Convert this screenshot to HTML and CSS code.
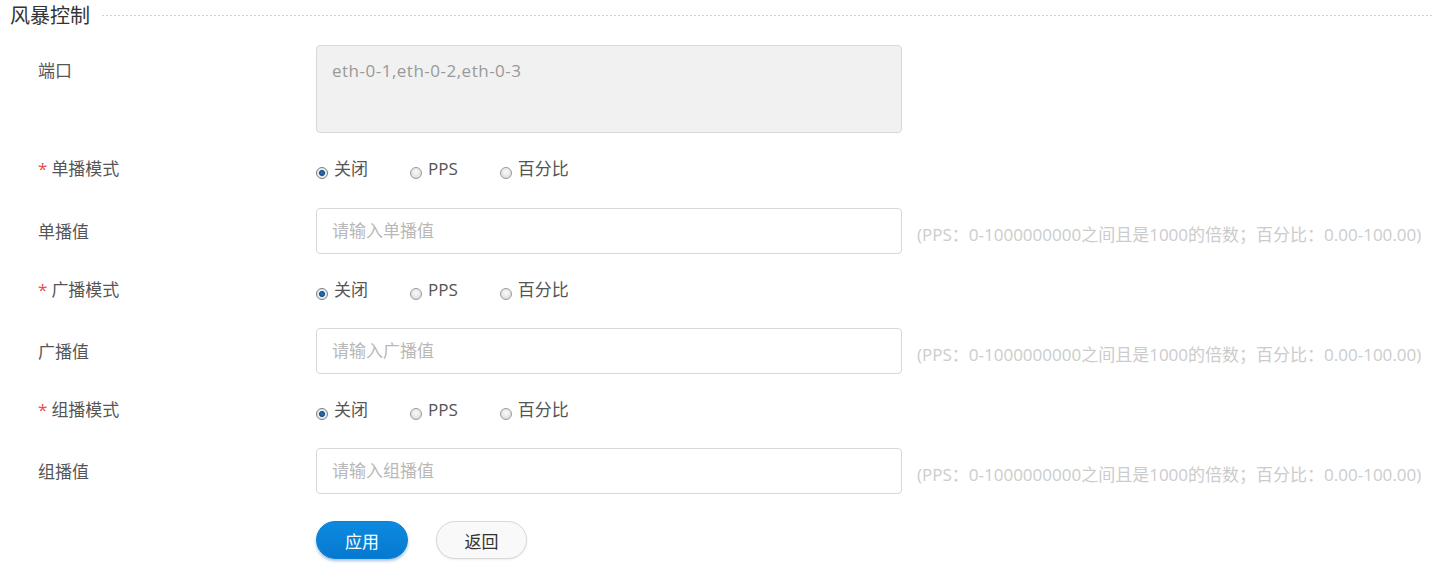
FILE: index.html
```html
<!DOCTYPE html>
<html lang="zh-CN">
<head>
<meta charset="utf-8">
<title>风暴控制</title>
<link rel="stylesheet" href="styles.css">
</head>
<body>
<div class="panel">
  <div class="legend">
    <span class="legend-text">风暴控制</span>
    <span class="legend-line"></span>
  </div>
  <form class="form">
    <div class="row row-area">
      <label class="label label-area">端口</label>
      <div class="field">
        <div class="textarea">eth-0-1,eth-0-2,eth-0-3</div>
      </div>
    </div>

    <div class="row row-radio">
      <label class="label"><span class="req">*</span>单播模式</label>
      <div class="field radios">
        <span class="radio-opt"><span class="radio checked"></span><span class="radio-text">关闭</span></span>
        <span class="radio-opt"><span class="radio"></span><span class="radio-text">PPS</span></span>
        <span class="radio-opt"><span class="radio"></span><span class="radio-text">百分比</span></span>
      </div>
    </div>

    <div class="row">
      <label class="label">单播值</label>
      <div class="field">
        <div class="input placeholder">请输入单播值</div>
        <span class="hint">(PPS：0-1000000000之间且是1000的倍数；百分比：0.00-100.00)</span>
      </div>
    </div>

    <div class="row row-radio">
      <label class="label"><span class="req">*</span>广播模式</label>
      <div class="field radios">
        <span class="radio-opt"><span class="radio checked"></span><span class="radio-text">关闭</span></span>
        <span class="radio-opt"><span class="radio"></span><span class="radio-text">PPS</span></span>
        <span class="radio-opt"><span class="radio"></span><span class="radio-text">百分比</span></span>
      </div>
    </div>

    <div class="row">
      <label class="label">广播值</label>
      <div class="field">
        <div class="input placeholder">请输入广播值</div>
        <span class="hint">(PPS：0-1000000000之间且是1000的倍数；百分比：0.00-100.00)</span>
      </div>
    </div>

    <div class="row row-radio">
      <label class="label"><span class="req">*</span>组播模式</label>
      <div class="field radios">
        <span class="radio-opt"><span class="radio checked"></span><span class="radio-text">关闭</span></span>
        <span class="radio-opt"><span class="radio"></span><span class="radio-text">PPS</span></span>
        <span class="radio-opt"><span class="radio"></span><span class="radio-text">百分比</span></span>
      </div>
    </div>

    <div class="row">
      <label class="label">组播值</label>
      <div class="field">
        <div class="input placeholder">请输入组播值</div>
        <span class="hint">(PPS：0-1000000000之间且是1000的倍数；百分比：0.00-100.00)</span>
      </div>
    </div>

    <div class="row row-buttons">
      <span class="label"></span>
      <div class="field buttons">
        <button type="button" class="btn btn-primary">应用</button>
        <button type="button" class="btn btn-default">返回</button>
      </div>
    </div>
  </form>
</div>
</body>
</html>
```

FILE: styles.css
```css
* { box-sizing: border-box; }

html, body {
  margin: 0;
  padding: 0;
  background: #ffffff;
}

body {
  font-family: "Open Sans", "Noto Sans CJK SC", sans-serif;
  font-size: 17px;
  color: #555555;
}

.panel {
  padding: 0 0 0 10px;
}

.legend {
  display: flex;
  align-items: center;
  height: 32px;
}

.legend-text {
  font-size: 20px;
  color: #333333;
  line-height: 32px;
  padding-right: 12px;
}

.legend-line {
  flex: 1;
  height: 1px;
  margin-top: -2px;
  background-image: repeating-linear-gradient(90deg, #d0d0d0 0 2px, transparent 2px 4px);
}

.form {
  margin-top: 13px;
  padding-left: 28px;
}

.row {
  display: flex;
  align-items: flex-start;
  margin-bottom: 22px;
}

.label {
  width: 278px;
  flex: none;
  line-height: 20px;
  padding-top: 14px;
  color: #555555;
}

.label-area {
  padding-top: 16px;
}

.req {
  color: #e84b4b;
  margin-right: 4px;
}

.field {
  display: flex;
  align-items: center;
}

.textarea {
  width: 586px;
  height: 88px;
  background: #f1f1f1;
  border: 1px solid #d8d8d8;
  border-radius: 4px;
  padding: 14px 15px;
  line-height: 22px;
  color: #999999;
  letter-spacing: 0.5px;
}

.input {
  width: 586px;
  height: 46px;
  border: 1px solid #d8d8d8;
  border-radius: 4px;
  padding: 0 15px;
  line-height: 44px;
  background: #ffffff;
}

.row-area + .row-radio {
  margin-top: 1px;
  margin-bottom: 23px;
}

.placeholder {
  color: #b8b8b8;
}

.hint {
  margin-left: 15px;
  color: #cccccc;
  white-space: nowrap;
  margin-top: 4px;
}

.row-radio .label {
  padding-top: 4px;
}

.radios {
  height: 30px;
}

.radio-opt {
  display: inline-flex;
  align-items: center;
  margin-right: 42px;
  color: #555555;
}

.radio-opt:nth-child(2) {
  margin-right: 42px;
}

.radio {
  width: 12px;
  height: 12px;
  border-radius: 50%;
  border: 1px solid #9a9a9a;
  background: radial-gradient(circle at 50% 40%, #fbfbfb 0, #dcdcdc 80%);
  margin-right: 6px;
  margin-top: 5px;
  position: relative;
  flex: none;
}

.radio.checked {
  border-color: #6e7f90;
  background: radial-gradient(circle at 50% 50%, #2f7ac0 0, #184d86 2.5px, #e8e8e8 3.5px, #f5f5f5 100%);
}

.radio-text {
  line-height: 20px;
  margin-top: -3px;
}

.row-buttons {
  margin-top: 27px;
}

.row-buttons .label {
  padding-top: 0;
}

.buttons {
  gap: 28px;
}

.btn {
  font-family: "Open Sans", "Noto Sans CJK SC", sans-serif;
  font-size: 17px;
  height: 38px;
  width: 92px;
  border-radius: 19px;
  cursor: pointer;
  padding: 0;
}

.btn-primary {
  color: #ffffff;
  border: 1px solid #0a7fd6;
  background: linear-gradient(#0c8ae0, #0679cf);
  box-shadow: 0 2px 3px rgba(0, 80, 150, 0.35);
}

.btn-default {
  width: 91px;
  color: #333333;
  border: 1px solid #d8d8d8;
  background: #f9f9f9;
  box-shadow: 0 1px 2px rgba(0, 0, 0, 0.08);
}
```
